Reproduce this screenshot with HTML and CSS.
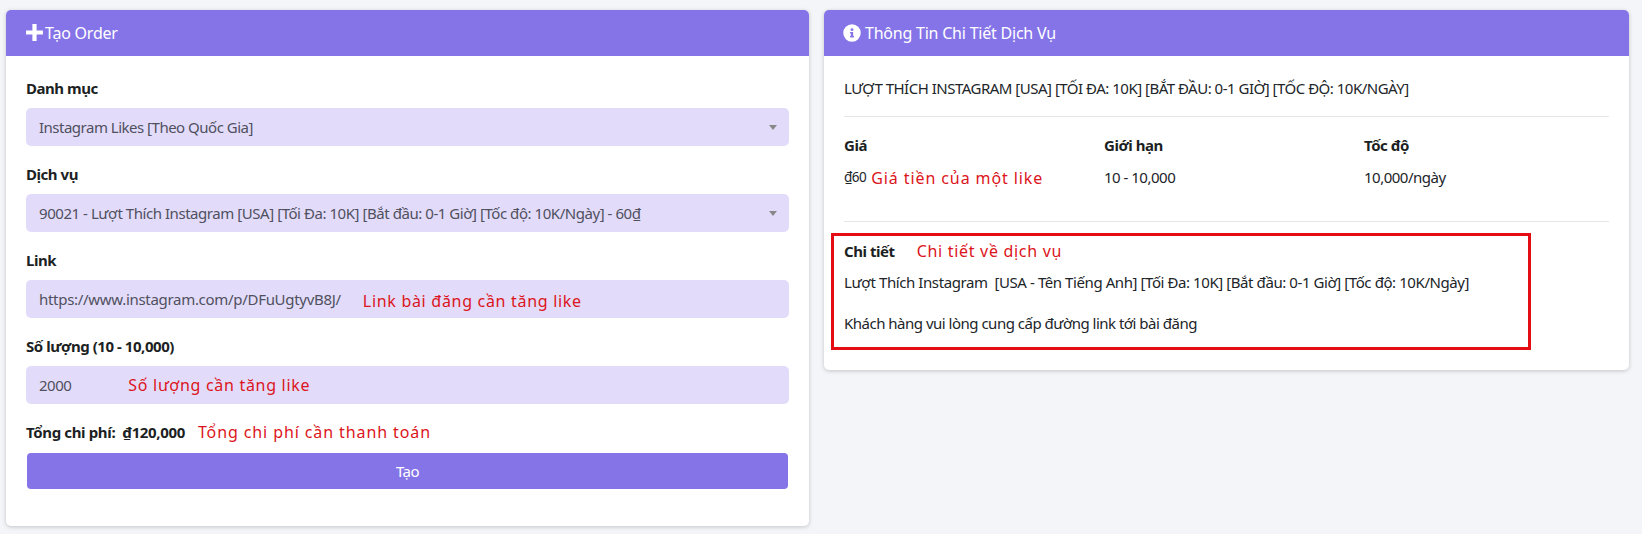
FILE: index.html
```html
<!DOCTYPE html>
<html lang="vi">
<head>
<meta charset="utf-8">
<title>Tạo Order</title>
<link rel="stylesheet" href="styles.css">
</head>
<body>
<main class="layout">
  <section class="card card-order">
    <header class="card-head">
      <svg class="icon-plus" viewBox="0 0 18 18" aria-hidden="true"><path d="M9 1v16M1 9h16"/></svg>
      <span>Tạo Order</span>
    </header>
    <div class="card-body order-body">
      <div class="field">
        <div class="label">Danh mục</div>
        <div class="control select">Instagram Likes [Theo Quốc Gia]</div>
      </div>
      <div class="field">
        <div class="label">Dịch vụ</div>
        <div class="control select service-select">90021 - Lượt Thích Instagram [USA] [Tối Đa: 10K] [Bắt đầu: 0-1 Giờ] [Tốc độ: 10K/Ngày] - 60₫</div>
      </div>
      <div class="field">
        <div class="label">Link</div>
        <div class="control"><span class="link-value">https://www.instagram.com/p/DFuUgtyvB8J/</span><span class="note note-link">Link bài đăng cần tăng like</span></div>
      </div>
      <div class="field">
        <div class="label">Số lượng (10 - 10,000)</div>
        <div class="control"><span>2000</span><span class="note note-qty">Số lượng cần tăng like</span></div>
      </div>
      <div class="total"><span class="label total-text">Tổng chi phí:&nbsp; ₫120,000</span><span class="note note-total">Tổng chi phí cần thanh toán</span></div>
      <div class="btn">Tạo</div>
    </div>
  </section>

  <section class="card card-info">
    <header class="card-head">
      <svg class="icon-info" viewBox="0 0 512 512" aria-hidden="true"><path d="M256 8a248 248 0 1 0 0 496 248 248 0 0 0 0-496zm0 110a42 42 0 1 1 0 84 42 42 0 0 1 0-84zm56 254c0 7-5 12-12 12h-88c-7 0-12-5-12-12v-24c0-7 5-12 12-12h12v-64h-12c-7 0-12-5-12-12v-24c0-7 5-12 12-12h64c7 0 12 5 12 12v100h12c7 0 12 5 12 12z"/></svg>
      <span>Thông Tin Chi Tiết Dịch Vụ</span>
    </header>
    <div class="card-body info-body">
      <p class="service-name">LƯỢT THÍCH INSTAGRAM [USA] [TỐI ĐA: 10K] [BẮT ĐẦU: 0-1 GIỜ] [TỐC ĐỘ: 10K/NGÀY]</p>
      <hr class="rule">
      <div class="stats">
        <div>
          <div class="label">Giá</div>
          <div class="stat-value"><span class="price">₫60</span><span class="note note-price">Giá tiền của một like</span></div>
        </div>
        <div>
          <div class="label">Giới hạn</div>
          <div class="stat-value">10 - 10,000</div>
        </div>
        <div>
          <div class="label">Tốc độ</div>
          <div class="stat-value">10,000/ngày</div>
        </div>
      </div>
      <hr class="rule rule-second">
      <div class="details">
        <div class="detail-title"><span class="label">Chi tiết</span><span class="note note-detail">Chi tiết về dịch vụ</span></div>
        <p class="detail-line detail-first">Lượt Thích Instagram &nbsp;[USA - Tên Tiếng Anh] [Tối Đa: 10K] [Bắt đầu: 0-1 Giờ] [Tốc độ: 10K/Ngày]</p>
        <p class="detail-line detail-second">Khách hàng vui lòng cung cấp đường link tới bài đăng</p>
        <div class="red-box"></div>
      </div>
    </div>
  </section>
</main>
</body>
</html>
```
FILE: styles.css
```css
* { box-sizing: border-box; }
html, body { margin: 0; height: 100%; }
body {
  background: #f3f5f9;
  font-family: "Noto Sans", sans-serif;
  font-size: 15px;
  letter-spacing: -0.5px;
  color: #212529;
  overflow: hidden;
}
.layout {
  display: flex;
  align-items: flex-start;
  gap: 15px;
  padding: 10px 13px 0 6px;
}
.card {
  background: #fff;
  border-radius: 5px;
  box-shadow: 0 1px 4px rgba(0, 0, 0, 0.2);
  overflow: hidden;
}
.card-order { width: 803px; height: 516px; flex: none; }
.card-info { width: 805px; height: 360px; flex: none; }
.card-head {
  display: flex;
  align-items: center;
  height: 46px;
  padding-left: 19px;
  padding-bottom: 1px;
  background: #8574e8;
  color: #fff;
  font-size: 16px;
  letter-spacing: -0.22px;
}
.icon-plus { width: 19px; height: 19px; margin-right: 1px; fill: none; stroke: #fff; stroke-width: 4; }
.icon-info { width: 18px; height: 18px; margin-right: 4px; fill: #fff; }
.card-body { position: relative; }
.order-body { padding: 21px 20px 0; }
.field { margin-bottom: 17px; }
.label { font-weight: 700; line-height: 22px; color: #1c1f23; letter-spacing: -0.45px; }
.field .label { margin-bottom: 9px; }
.control {
  display: flex;
  align-items: center;
  height: 38px;
  padding-left: 13px;
  background: #e2dcfa;
  border-radius: 5px;
  color: #50505e;
}
.service-select { letter-spacing: -0.45px; }
.link-value { letter-spacing: -0.3px; }
.select { position: relative; }
.select::after {
  content: "";
  position: absolute;
  right: 12px;
  top: 17px;
  border: 4px solid transparent;
  border-top: 5px solid #888;
  border-bottom: 0;
}
.note {
  color: #dc1420;
  font-size: 16px;
  font-weight: 400;
  letter-spacing: 0.7px;
}
.note-link { margin: 3px 0 0 22px; }
.note-qty { margin-left: 57px; }
.total { display: flex; align-items: center; height: 22px; }
.total-text { letter-spacing: -0.36px; }
.note-total { margin-left: 13px; letter-spacing: 0.9px; }
.btn {
  display: flex;
  align-items: center;
  justify-content: center;
  height: 36px;
  margin: 10px 1px 0;
  background: #8574e8;
  border-radius: 4px;
  color: #fff;
}
.info-body { padding: 21px 20px 0; }
.service-name { margin: 0; line-height: 22px; }
.rule { margin: 17px 0 0; border: 0; border-top: 1px solid #e4e6ea; }
.stats {
  display: grid;
  grid-template-columns: repeat(3, 1fr);
  column-gap: 15px;
  margin-top: 17px;
}
.stat-value { display: flex; align-items: center; height: 22px; margin-top: 10px; }
.price { font-size: 13.5px; }
.note-price { margin: 2px 0 0 5px; letter-spacing: 0.9px; }
.rule-second { margin-top: 33px; }
.details { position: relative; margin-top: 18px; }
.detail-title { display: flex; align-items: center; height: 22px; }
.note-detail { margin-left: 22px; }
.detail-line { margin: 9px 0 0; line-height: 22px; }
.detail-first { letter-spacing: -0.42px; }
.detail-second { margin-top: 19px; }
.red-box {
  position: absolute;
  left: -13px;
  top: -7px;
  width: 700px;
  height: 117px;
  border: 3px solid #e40d14;
}
```
